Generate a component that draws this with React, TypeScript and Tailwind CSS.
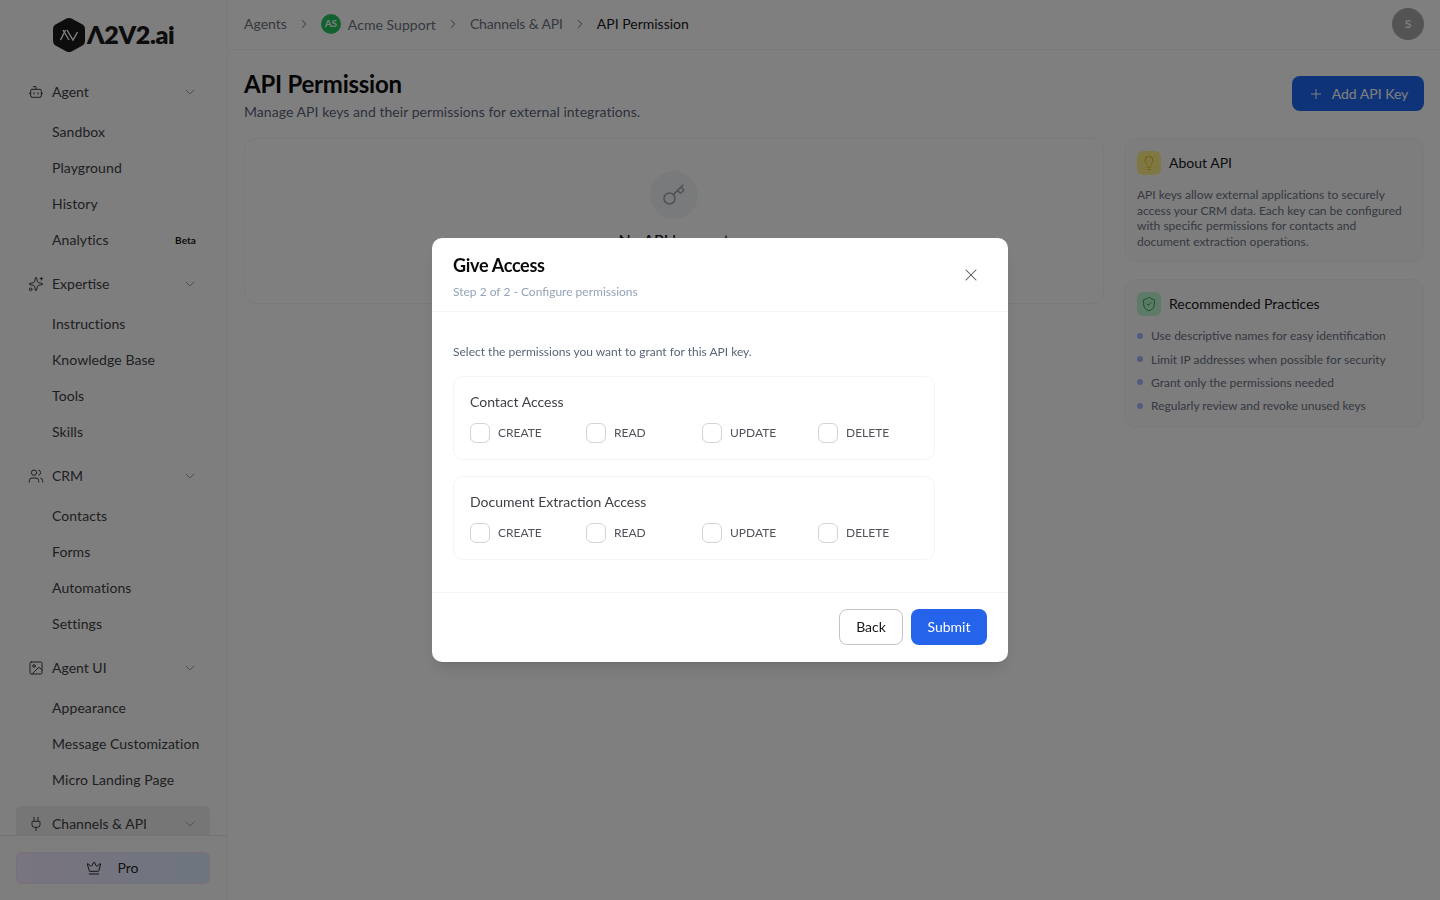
import React from "react";
import { Bot, ChevronDown, ChevronRight, Crown, Image, Key, Lightbulb, Plug, Plus, ShieldCheck, Sparkles, Users, X } from "lucide-react";

const font = { fontFamily: "Lato, sans-serif" };

type Group = { label: string; icon: React.ReactNode; items?: string[]; active?: boolean };
const groups: Group[] = [
  { label: "Agent", icon: <Bot className="size-4" strokeWidth={1.5} />, items: ["Sandbox", "Playground", "History", "Analytics"] },
  { label: "Expertise", icon: <Sparkles className="size-4" strokeWidth={1.5} />, items: ["Instructions", "Knowledge Base", "Tools", "Skills"] },
  { label: "CRM", icon: <Users className="size-4" strokeWidth={1.5} />, items: ["Contacts", "Forms", "Automations", "Settings"] },
  { label: "Agent UI", icon: <Image className="size-4" strokeWidth={1.5} />, items: ["Appearance", "Message Customization", "Micro Landing Page"] },
  { label: "Channels & API", icon: <Plug className="size-4" strokeWidth={1.5} />, active: true },
];

function Sidebar() {
  return (
    <aside className="flex h-screen w-[228px] shrink-0 flex-col border-r border-[#f3f4f6] bg-[#fcfcfd]">
      <div className="flex h-[68px] shrink-0 items-center pl-[52px] pt-[1px]">
        <svg width="34" height="36" viewBox="0 0 34 36" className="shrink-0">
          <path d="M14.5 1.6 Q17 0.4 19.5 1.6 L30.5 7.6 Q33 9 33 12 L33 24 Q33 27 30.5 28.4 L19.5 34.4 Q17 35.6 14.5 34.4 L3.5 28.4 Q1 27 1 24 L1 12 Q1 9 3.5 7.6 Z" fill="#1a1a1a" />
          <path d="M8.5 23 L13.5 13 M11 13 L17 23 M15 13 L21 23 L25.5 15" fill="none" stroke="#fff" strokeWidth="1.4" />
        </svg>
        <span className="ml-[1px] text-[25px] font-extrabold leading-none tracking-[-0.4px] text-[#1a1a1a]">Λ2V2.ai</span>
      </div>
      <nav className="flex min-h-0 flex-1 flex-col gap-2 overflow-hidden pl-4 pr-[17px] pt-[6px]">
        {groups.map((g) => (
          <div key={g.label} className="flex shrink-0 flex-col gap-1">
            <div className={`flex h-9 shrink-0 items-center gap-2 rounded-md px-3 text-sm text-[#3f3f46] ${g.active ? "bg-[#ececee]" : ""}`}>
              {g.icon}
              <span className="flex-1">{g.label}</span>
              <ChevronDown className="size-4 text-[#a1a1aa]" strokeWidth={1.5} />
            </div>
            {g.items && (
              <div className="flex flex-col">
                {g.items.map((i) => (
                  <div key={i} className="flex h-9 items-center justify-between whitespace-nowrap pl-9 pr-[14px] text-sm tracking-[0.08px] text-[#3f3f46]">
                    <span>{i}</span>
                    {i === "Analytics" && <span className="text-[10px] font-bold text-[#18181b]">Beta</span>}
                  </div>
                ))}
              </div>
            )}
          </div>
        ))}
      </nav>
      <div className="shrink-0 border-t border-[#e5e7eb] pb-4 pl-4 pr-[17px] pt-4">
        <div className="flex h-8 items-center justify-center gap-[15px] rounded-md border border-[#e9e5ef] bg-linear-to-r from-[#f3e8ff] to-[#dbeafe] pr-[1px] text-sm text-[#27272a]">
          <Crown className="size-4" strokeWidth={1.5} />
          <span>Pro</span>
        </div>
      </div>
    </aside>
  );
}

function Crumbs() {
  const sep = <ChevronRight className="size-[14px] text-[#4b5563]" strokeWidth={1.5} />;
  return (
    <header className="flex h-[50px] shrink-0 items-center justify-between border-b border-[#f3f4f6] pb-[2px] pl-4 pr-4">
      <div className="flex items-center text-sm text-[#6b7280]">
        <span>Agents</span>
        <span className="mx-[10px]">{sep}</span>
        <span className="mr-[7px] flex size-5 items-center justify-center rounded-full bg-[#22c55e] text-[10px] font-bold text-white">AS</span>
        <span className="translate-y-[1px] tracking-[0.05px]">Acme Support</span>
        <span className="mx-[10px]">{sep}</span>
        <span className="tracking-[-0.15px]">Channels &amp; API</span>
        <span className="mx-[10px]">{sep}</span>
        <span className="text-[#18181b]">API Permission</span>
      </div>
      <div className="flex size-8 items-center justify-center rounded-full bg-[#a8a8a8] text-xs font-bold text-white">S</div>
    </header>
  );
}

function InfoCard({ tile, icon, title, children }: { tile: string; icon: React.ReactNode; title: string; children: React.ReactNode }) {
  return (
    <div className="rounded-xl border border-[#f3f4f6] bg-[#fafafc] p-3">
      <div className="mb-3 flex items-center gap-2">
        <div className={`flex size-6 items-center justify-center rounded-md ${tile}`}>{icon}</div>
        <span className="text-sm text-[#18181b]">{title}</span>
      </div>
      {children}
    </div>
  );
}

function Main() {
  return (
    <main className="flex min-w-0 flex-1 flex-col">
      <Crumbs />
      <div className="flex flex-col px-4 pt-[22px]">
        <div className="flex items-start justify-between">
          <div>
            <h1 className="text-2xl font-bold leading-6 tracking-[-0.25px] text-[#0a0a0a]">API Permission</h1>
            <p className="mt-[6px] text-sm leading-5 tracking-[0.05px] text-[#5a6478]">Manage API keys and their permissions for external integrations.</p>
          </div>
          <button className="mt-[4px] flex h-[35px] w-[132px] items-center justify-center gap-2 rounded-lg bg-[#1f66f0] text-sm text-white">
            <Plus className="size-4" strokeWidth={1.5} />
            <span>Add API Key</span>
          </button>
        </div>
        <div className="mt-4 flex items-start gap-5">
          <section className="flex h-[166px] flex-1 flex-col items-center rounded-xl border border-[#f3f4f6] pt-8">
            <div className="flex size-12 items-center justify-center rounded-full bg-[#f3f4f6]">
              <Key className="size-6 text-[#9ca3af]" strokeWidth={1.5} />
            </div>
            <p className="mt-[9px] text-base font-medium leading-6 text-[#18181b]">No API keys yet</p>
          </section>
          <aside className="flex w-[300px] shrink-0 flex-col gap-[17px]">
            <InfoCard tile="bg-[#fef08a]" icon={<Lightbulb className="size-4 text-[#eab308]" strokeWidth={1.5} />} title="About API">
              <p className="text-xs leading-[15.6px] text-[#6b7280]">API keys allow external applications to securely access your CRM data. Each key can be configured with specific permissions for contacts and document extraction operations.</p>
            </InfoCard>
            <InfoCard tile="bg-[#bbf7d0]" icon={<ShieldCheck className="size-4 text-[#16a34a]" strokeWidth={1.5} />} title="Recommended Practices">
              <ul className="flex flex-col gap-[8px] pb-[2px]">
                {["Use descriptive names for easy identification", "Limit IP addresses when possible for security", "Grant only the permissions needed", "Regularly review and revoke unused keys"].map((t) => (
                  <li key={t} className="flex items-center gap-2 text-xs leading-[15.2px] text-[#6b7280]">
                    <span className="size-[6px] rounded-full bg-[#a5b4fc]" />
                    {t}
                  </li>
                ))}
              </ul>
            </InfoCard>
          </aside>
        </div>
      </div>
    </main>
  );
}

function PermCard({ title }: { title: string }) {
  return (
    <div className="h-[84px] w-[482px] rounded-[10px] border border-[#f3f4f6] px-4 pt-[15px]">
      <div className="text-sm leading-5 text-[#3f3f46]">{title}</div>
      <div className="mt-[11px] grid w-[464px] grid-cols-4">
        {["CREATE", "READ", "UPDATE", "DELETE"].map((l) => (
          <label key={l} className="flex items-center gap-2 text-xs text-[#52525b]">
            <span className="size-5 rounded-md border border-[#d4d4d8] bg-white" />
            {l}
          </label>
        ))}
      </div>
    </div>
  );
}

function Modal() {
  return (
    <div className="fixed inset-0 flex items-center justify-center bg-black/50">
      <div className="flex h-[424px] w-[576px] flex-col rounded-[10px] bg-white shadow-lg">
        <div className="relative h-[74px] shrink-0 border-b border-[#f3f4f6] px-[21px] pt-[15px]">
          <h2 className="text-lg font-bold leading-6 tracking-[-0.3px] text-[#0a0a0a]">Give Access</h2>
          <p className="mt-[7px] text-xs leading-4 text-[#94a3b8]">Step 2 of 2 - Configure permissions</p>
          <X className="absolute right-[27px] top-[27px] size-5 text-[#52525b]" strokeWidth={1.25} />
        </div>
        <div className="flex flex-1 flex-col gap-4 px-[21px] pt-[32px]">
          <p className="text-xs leading-4 text-[#5a6478]">Select the permissions you want to grant for this API key.</p>
          <PermCard title="Contact Access" />
          <PermCard title="Document Extraction Access" />
        </div>
        <div className="flex h-[70px] shrink-0 items-center justify-end gap-2 border-t border-[#f3f4f6] px-[21px] pb-[2px]">
          <button className="h-9 w-16 rounded-lg border border-[#c4c4c8] bg-white text-sm text-[#18181b]">Back</button>
          <button className="h-9 w-[76px] rounded-lg bg-[#2563eb] text-sm text-white">Submit</button>
        </div>
      </div>
    </div>
  );
}

export default function App() {
  return (
    <div style={font} className="flex h-screen overflow-hidden bg-white">
      <Sidebar />
      <Main />
      <Modal />
    </div>
  );
}
